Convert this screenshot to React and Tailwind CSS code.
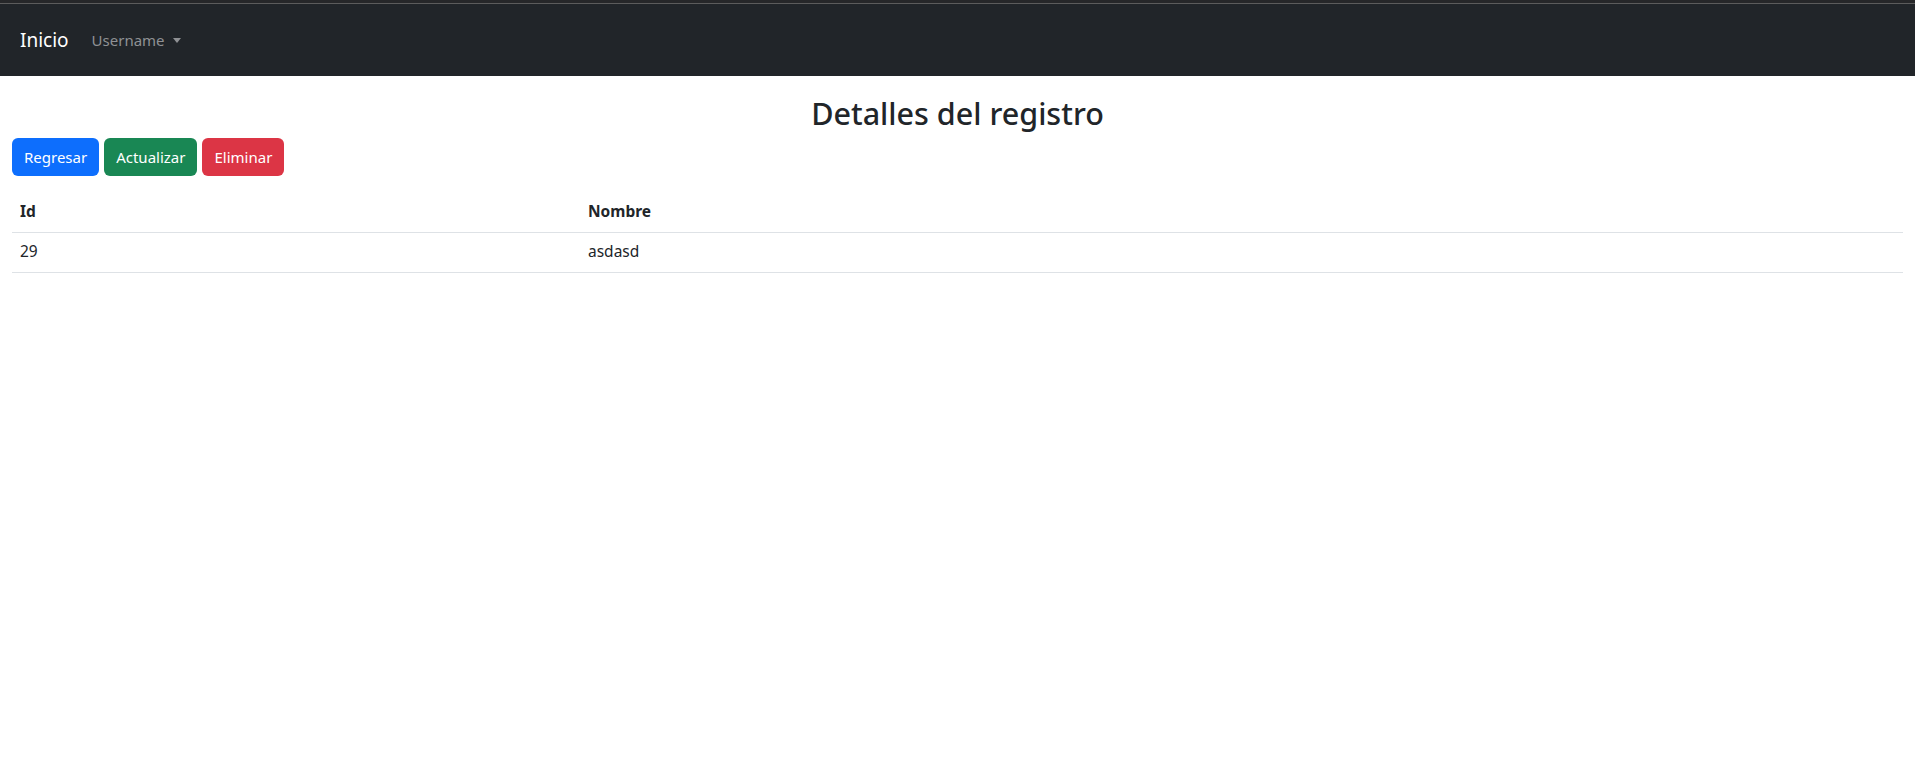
import React from "react";

export default function App() {
  return (
    <div className="min-h-screen bg-white text-[#212529] font-['Noto_Sans',sans-serif]">
      {/* top strip */}
      <div className="h-[3px] bg-[#262729]" />
      <div className="h-px bg-[#5c5c5c]" />

      {/* Navbar */}
      <nav className="h-[72px] bg-[#212529] flex items-center px-5">
        <a className="text-white text-[19px] mr-[23px] leading-none">Inicio</a>
        <a className="flex items-center text-[15px] text-[#8f9194] leading-none">
          Username
          <span className="ml-[8px] w-0 h-0 border-l-[4px] border-r-[4px] border-t-[5px] border-l-transparent border-r-transparent border-t-[#8f9194]" />
        </a>
      </nav>

      {/* Content */}
      <div className="px-3">
        <h2 className="text-center text-[30.5px] font-medium leading-[38px] mt-[18px] mb-[6px]">
          Detalles del registro
        </h2>

        <div className="flex gap-[5px]">
          <button className="h-[38px] px-[12px] rounded-[6px] bg-[#0d6efd] text-white text-[15px]">
            Regresar
          </button>
          <button className="h-[38px] px-[12px] rounded-[6px] bg-[#198754] text-white text-[15px]">
            Actualizar
          </button>
          <button className="h-[38px] px-[12px] rounded-[6px] bg-[#dc3545] text-white text-[15px]">
            Eliminar
          </button>
        </div>

        <table className="w-full mt-[16px] border-collapse text-[15.5px]">
          <thead>
            <tr className="border-b border-[#dee2e6]">
              <th className="w-[568px] text-left font-bold px-2 h-10">Id</th>
              <th className="text-left font-bold px-2 h-10">Nombre</th>
            </tr>
          </thead>
          <tbody>
            <tr className="border-b border-[#dee2e6]">
              <td className="px-2 h-10">29</td>
              <td className="px-2 h-10">asdasd</td>
            </tr>
          </tbody>
        </table>
      </div>
    </div>
  );
}
